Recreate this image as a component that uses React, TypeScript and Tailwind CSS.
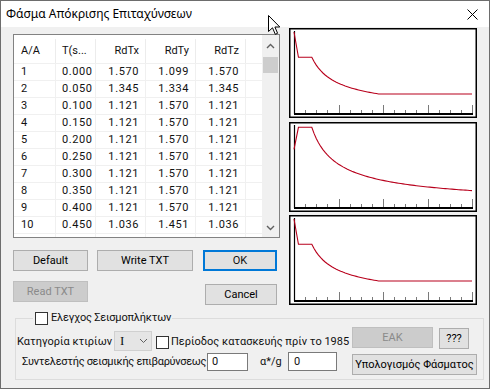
import React from "react";

type Row = [string, string, string, string, string];

const rows: Row[] = [
  ["1", "0.000", "1.570", "1.099", "1.570"],
  ["2", "0.050", "1.345", "1.334", "1.345"],
  ["3", "0.100", "1.121", "1.570", "1.121"],
  ["4", "0.150", "1.121", "1.570", "1.121"],
  ["5", "0.200", "1.121", "1.570", "1.121"],
  ["6", "0.250", "1.121", "1.570", "1.121"],
  ["7", "0.300", "1.121", "1.570", "1.121"],
  ["8", "0.350", "1.121", "1.570", "1.121"],
  ["9", "0.400", "1.121", "1.570", "1.121"],
  ["10", "0.450", "1.036", "1.451", "1.036"],
  ["", "", "", "", ""],
];

function Chev({ up }: { up?: boolean }) {
  return (
    <svg width="9" height="6" viewBox="0 0 9 6">
      <polyline
        points={up ? "1,5 4.5,1.5 8,5" : "1,1 4.5,4.5 8,1"}
        fill="none"
        stroke="#606060"
        strokeWidth="1.4"
      />
    </svg>
  );
}

function Table() {
  return (
    <div className="w-[267px] h-[204px] border border-[#828282] bg-white flex">
      <div className="w-[248px] h-[202px] overflow-hidden flex flex-col">
        <div className="h-[28px] shrink-0 flex pt-[4px]">
          <div className="w-[42px] pl-[7px] flex items-center border-r border-[#ececec]">A/A</div>
          <div className="w-[40px] pl-[6px] flex items-center border-r border-[#ececec]">T(s...</div>
          <div className="w-[50px] pr-[6px] flex items-center justify-end border-r border-[#ececec]">RdTx</div>
          <div className="w-[50px] pr-[6px] flex items-center justify-end border-r border-[#ececec]">RdTy</div>
          <div className="w-[50px] pr-[6px] flex items-center justify-end border-r border-[#ececec]">RdTz</div>
          <div className="w-[16px]" />
        </div>
        {rows.map((r, i) => (
          <div key={i} className="h-[17px] shrink-0 flex border-t border-[#f0f0f0]">
            <div className="w-[42px] pl-[7px] flex items-center border-r border-[#f0f0f0]">{r[0]}</div>
            <div className="w-[40px] pl-[6px] flex items-center border-r border-[#f0f0f0] tracking-[0.6px]">{r[1]}</div>
            <div className="w-[50px] pr-[6px] flex items-center justify-end border-r border-[#f0f0f0] tracking-[0.6px]">{r[2]}</div>
            <div className="w-[50px] pr-[6px] flex items-center justify-end border-r border-[#f0f0f0] tracking-[0.6px]">{r[3]}</div>
            <div className="w-[50px] pr-[6px] flex items-center justify-end border-r border-[#f0f0f0] tracking-[0.6px]">{r[4]}</div>
            <div className="w-[16px]" />
          </div>
        ))}
      </div>
      <div className="w-[17px] h-[202px] bg-[#f0f0f0] flex flex-col">
        <div className="h-[22px] flex items-center justify-center">
          <Chev up />
        </div>
        <div className="h-[16px] mx-[1px] bg-[#cdcdcd]" />
        <div className="flex-1" />
        <div className="h-[17px] flex items-center justify-center pb-[1px]">
          <Chev />
        </div>
      </div>
    </div>
  );
}

function Chart({ kind }: { kind: "x" | "y" }) {
  const X = (t: number) => 5 + t * 44.5;
  const pts: [number, number][] = [];
  if (kind === "x") {
    pts.push([X(0), 4], [X(0.1), 29.3], [X(0.4), 29.3]);
    for (let t = 0.45; t <= 4.0001; t += 0.05) {
      let y = 86 - 56.7 * Math.pow(0.4 / t, 2 / 3);
      if (y > 66) y = 66;
      pts.push([X(t), y]);
    }
  } else {
    pts.push([X(0), 27.3], [X(0.1), 5.3], [X(0.4), 5.3]);
    for (let t = 0.45; t <= 4.0001; t += 0.05) {
      const y = 86 - 80.7 * Math.pow(0.4 / t, 2 / 3);
      pts.push([X(t), y]);
    }
  }
  const ticks = Array.from({ length: 17 }, (_, i) => i);
  return (
    <svg width="188" height="90" viewBox="0 0 188 90" className="block">
      <rect x="0.75" y="0.75" width="186.5" height="88.5" fill="#fff" stroke="#000" strokeWidth="1.5" />
      {ticks.map((i) => {
        const x = Math.round(5 + i * 11.125) + 0.5;
        return (
          <line
            key={i}
            x1={x}
            x2={x}
            y1={i % 4 === 0 ? 77 : 82}
            y2={86}
            stroke="#7a7a7a"
            strokeWidth="1"
          />
        );
      })}
      <line x1="5.5" x2="5.5" y1="3" y2="86" stroke="#000" strokeWidth="1.2" />
      <line x1="5" x2="184" y1="86" y2="86" stroke="#000" strokeWidth="1.8" />
      <polyline
        points={pts.map((p) => `${p[0].toFixed(2)},${p[1].toFixed(2)}`).join(" ")}
        fill="none"
        stroke="#b8001c"
        strokeWidth="1.1"
      />
    </svg>
  );
}

const btn =
  "h-[21px] flex items-center justify-center border border-[#adadad] bg-[#e1e1e1] text-black";
const btnDisabled =
  "h-[21px] flex items-center justify-center border border-[#bfbfbf] bg-[#cccccc] text-[#8a8a8a]";

export default function App() {
  return (
    <div className="relative w-[490px] h-[389px] border border-[#6d6d6d] bg-[#f0f0f0] flex flex-col overflow-hidden font-['Roboto',sans-serif] text-[11px] leading-[16px] text-[#111]">
      {/* title bar */}
      <div className="h-[26px] shrink-0 bg-white flex items-center justify-between pl-[5px] pr-[11px] font-['Noto_Sans',sans-serif] text-[12px] text-black">
        <span>Φάσμα Απόκρισης Επιταχύνσεων</span>
        <svg width="11" height="11" viewBox="0 0 11 11">
          <path d="M0.5 0.5 L10.5 10.5 M10.5 0.5 L0.5 10.5" stroke="#000" strokeWidth="1" />
        </svg>
      </div>

      {/* main */}
      <div className="flex shrink-0">
        <div className="ml-[12px] mt-[7px] w-[267px] flex flex-col">
          <Table />
          <div className="flex mt-[12px]">
            <div className={btn + " w-[75px]"}>Default</div>
            <div className={btn + " w-[96px] ml-[9px]"}>Write TXT</div>
            <div className="h-[21px] w-[74px] ml-[10px] flex items-center justify-center border-2 border-[#0078d7] bg-[#e1e1e1]">
              OK
            </div>
          </div>
          <div className="flex mt-[10px] items-start">
            <div className={btnDisabled + " w-[75px]"}>Read TXT</div>
            <div className={btn + " w-[72px] ml-[117px] mt-[3px]"}>Cancel</div>
          </div>
        </div>
        <div className="ml-[9px] mt-[1px] flex flex-col">
          <Chart kind="x" />
          <div className="mt-[4px]">
            <Chart kind="y" />
          </div>
          <div className="mt-[3px]">
            <Chart kind="x" />
          </div>
        </div>
      </div>

      {/* group */}
      <fieldset className="ml-[14px] mt-[6px] w-[469px] border border-[#dcdcdc] px-0 pt-[2px] pb-[4px]">
        <legend className="ml-[17px] pl-[2px] pr-[1px] flex items-center h-[14px]">
          <span className="w-[13px] h-[13px] border border-[#333] bg-white inline-block" />
          <span className="ml-[3px] tracking-[-0.2px]">Ελεγχος Σεισμοπλήκτων</span>
        </legend>
        <div className="h-[24px] flex items-start">
          <span className="ml-[1px] w-[97px] mt-[7px] whitespace-nowrap">Κατηγορία κτιρίων</span>
          <div className="w-[38px] h-[20px] mt-[4px] bg-[#e5e5e5] border border-[#d0d0d0] flex items-center justify-between pl-[5px] pr-[3px]">
            <span className="font-['Liberation_Serif',serif] text-[13px]">I</span>
            <svg width="9" height="6" viewBox="0 0 9 6">
              <polyline points="1,1 4.5,4.5 8,1" fill="none" stroke="#606060" strokeWidth="1" />
            </svg>
          </div>
          <div className="w-[200px] flex items-start pl-[4px]">
            <span className="w-[13px] h-[13px] mt-[9px] border border-[#333] bg-white shrink-0" />
            <span className="ml-[2px] mt-[7px] whitespace-nowrap">Περίοδος κατασκευής πρίν το 1985</span>
          </div>
          <div className={btnDisabled + " w-[81px]"}>ΕΑΚ</div>
          <div className={btn + " w-[30px] h-[20px] ml-[6px] mt-[1px]"}>???</div>
        </div>
        <div className="h-[23px] mt-[1px] flex items-start">
          <span className="ml-[6px] w-[185px] mt-[2px] whitespace-nowrap tracking-[-0.3px]">Συντελεστής σεισμικής επιβαρύνσεως</span>
          <div className="w-[41px] h-[18px] mt-[1px] bg-white border border-[#7a7a7a] flex items-center pl-[4px]">0</div>
          <span className="ml-[12px] w-[28px] mt-[2px]">α*/g</span>
          <div className="w-[49px] h-[19px] bg-white border border-[#7a7a7a] flex items-center pl-[5px]">0</div>
          <div className={btn + " w-[125px] h-[20px] ml-[15px] mt-[2px] whitespace-nowrap"}>Υπολογισμός Φάσματος</div>
        </div>
      </fieldset>

      {/* mouse cursor */}
      <svg className="absolute left-[267px] top-[14px]" width="13" height="21" viewBox="0 0 13 21">
        <path
          d="M0.5 0.5 L0.5 16.5 L4.5 12.8 L7.3 19.3 L9.6 18.3 L6.9 12 L11.8 12 Z"
          fill="#fff"
          stroke="#000"
          strokeWidth="1"
          strokeLinejoin="round"
        />
      </svg>
    </div>
  );
}
